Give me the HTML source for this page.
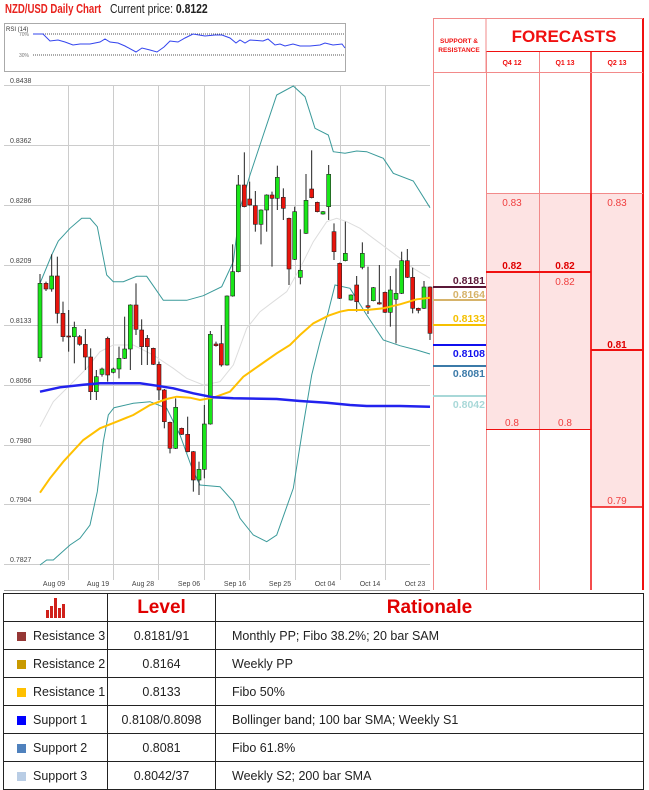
<!DOCTYPE html>
<html><head><meta charset="utf-8"><style>
*{margin:0;padding:0;box-sizing:border-box}
body{width:649px;height:790px;background:#fff;font-family:"Liberation Sans",sans-serif;position:relative;overflow:hidden}
.t{position:absolute;white-space:nowrap;transform-origin:0 0}
table{position:absolute;left:3px;top:593px;width:641px;border-collapse:collapse;font-size:12.5px;color:#222;table-layout:fixed}
td{border:1px solid #222;height:28px;padding:0;white-space:nowrap;line-height:26px;overflow:hidden}
td.c{text-align:center}
td.r{padding-left:16px}
.sq{display:inline-block;width:9px;height:9px;margin:0 7px 0 13px;vertical-align:-1px}
.h{color:#e00000;font-weight:bold;font-size:19px;text-align:center}
</style></head><body>
<div class="t" style="left:5px;top:1px;font-size:13px;font-weight:bold;color:#e8231e;transform:scaleX(0.74)">NZD/USD Daily Chart</div>
<div class="t" style="left:110px;top:1px;font-size:13px;color:#222;transform:scaleX(0.8)">Current price: <b>0.8122</b></div>
<svg id="s" width="649" height="593" style="position:absolute;left:0;top:0" font-family="Liberation Sans, sans-serif"></svg>
<table>
<colgroup><col style="width:104px"><col style="width:108px"><col></colgroup>
<tr><td style="text-align:center"><svg width="22" height="20" viewBox="0 0 22 20" style="vertical-align:middle"><g fill="#d0201a"><rect x="1" y="12" width="3" height="8"/><rect x="5" y="8" width="3" height="12"/><rect x="9" y="0" width="3" height="20"/><rect x="13" y="10" width="3" height="10"/><rect x="17" y="6" width="3" height="14"/></g></svg></td><td class="h">Level</td><td class="h">Rationale</td></tr>
<tr><td><span class="sq" style="background:#953735"></span>Resistance 3</td><td class="c">0.8181/91</td><td class="r">Monthly PP; Fibo 38.2%; 20 bar SAM</td></tr>
<tr><td><span class="sq" style="background:#c99a00"></span>Resistance 2</td><td class="c">0.8164</td><td class="r">Weekly PP</td></tr>
<tr><td><span class="sq" style="background:#ffc000"></span>Resistance 1</td><td class="c">0.8133</td><td class="r">Fibo 50%</td></tr>
<tr><td><span class="sq" style="background:#0000ff"></span>Support 1</td><td class="c">0.8108/0.8098</td><td class="r">Bollinger band; 100 bar SMA; Weekly S1</td></tr>
<tr><td><span class="sq" style="background:#4f81bd"></span>Support 2</td><td class="c">0.8081</td><td class="r">Fibo 61.8%</td></tr>
<tr><td><span class="sq" style="background:#b9cde5"></span>Support 3</td><td class="c">0.8042/37</td><td class="r">Weekly S2; 200 bar SMA</td></tr>
</table>
<script>
var s='';
function L(x1,y1,x2,y2,c,w,extra){s+='<line x1="'+x1+'" y1="'+y1+'" x2="'+x2+'" y2="'+y2+'" stroke="'+c+'" stroke-width="'+(w||1)+'" '+(extra||'')+'/>';}
function R(x,y,w,h,f,st,sw){s+='<rect x="'+x+'" y="'+y+'" width="'+w+'" height="'+h+'" fill="'+f+'"'+(st?' stroke="'+st+'" stroke-width="'+(sw||1)+'"':'')+'/>';}
function T(x,y,t,sz,c,a,b){s+='<text x="'+x+'" y="'+y+'" font-size="'+sz+'" fill="'+c+'"'+(a?' text-anchor="'+a+'"':'')+(b?' font-weight="bold"':'')+'>'+t+'</text>';}
R(4.5,23.5,341,48,'#fff','#aaa');
T(6,31,'RSI (14)',6,'#333');
L(33,34,344,34,'#555',1,'stroke-dasharray="1,1"');L(33,55,344,55,'#555',1,'stroke-dasharray="1,1"');
T(29,36,'70%',5,'#777','end');T(29,57,'30%',5,'#777','end');
var rsi=[[33,34],[43,34],[50,41],[58,40],[65,42],[73,45],[80,44],[90,44],[100,42],[105,39],[110,42],[118,43],[125,46],[136,52],[142,48],[150,50],[157,52],[164,47],[170,41],[178,42],[185,38],[193,34],[205,36],[215,35],[222,35],[230,38],[236,43],[240,40],[245,43],[250,40],[263,41],[268,39],[275,45],[280,44],[285,46],[293,44],[300,46],[310,46],[320,45],[325,43],[333,45],[342,44],[345,48]];
s+='<polyline fill="none" stroke="#3344ee" stroke-width="1" points="'+rsi.map(p=>p.join(',')).join(' ')+'"/>';
var gy=[85,145,205,265,325,385,445,504,564],lab=['0.8438','0.8362','0.8286','0.8209','0.8133','0.8056','0.7980','0.7904','0.7827'];
gy.forEach((y,i)=>{L(4,y+.5,430,y+.5,'#ccc');T(10,y-2,lab[i],7,'#444');});
[68,113,158,204,249,295,340,385].forEach(x=>L(x+.5,85,x+.5,580,'#ccc'));
L(4,590.5,430,590.5,'#999');
var dl=['Aug 09','Aug 19','Aug 28','Sep 06','Sep 16','Sep 25','Oct 04','Oct 14','Oct 23'],dx=[54,98,143,189,235,280,325,370,415];
dl.forEach((d,i)=>T(dx[i],586,d,7,'#444','middle'));
function P(a,c,w){s+='<polyline fill="none" stroke="'+c+'" stroke-width="'+w+'" points="'+a.map(p=>(p[0]/3).toFixed(1)+','+(p[1]/3+75).toFixed(1)).join(' ')+'"/>';}
P([[120,1055],[160,980],[210,930],[260,880],[300,830],[340,810],[400,810],[460,840],[520,880],[560,910],[610,930],[660,920],[700,870],[740,760],[780,710],[820,680],[860,650],[900,580],[940,500],[980,440],[1010,430],[1040,440],[1080,460],[1120,490],[1160,520],[1200,550],[1240,580],[1290,610]],'#ddd',1);
P([[120,625],[155,540],[175,498],[210,460],[245,430],[270,430],[292,455],[320,600],[340,620],[370,620],[410,604],[440,604],[490,676],[560,676],[610,662],[665,635],[700,560],[720,400],[750,300],[790,180],[830,60],[880,33],[915,65],[945,160],[985,180],[1000,230],[1035,235],[1070,228],[1100,230],[1150,250],[1180,295],[1240,318],[1290,398]],'#3a9a9a',1);
P([[120,1470],[140,1455],[160,1455],[210,1410],[240,1390],[270,1350],[292,1250],[310,1100],[325,1020],[342,998],[400,985],[450,980],[500,1000],[540,1080],[580,1190],[600,1230],[660,1235],[700,1280],[720,1330],[760,1380],[800,1400],[830,1380],[880,1240],[910,1050],[935,900],[960,800],[985,710],[1005,630],[1050,640],[1100,720],[1150,795],[1200,812],[1250,825],[1290,837]],'#3a9a9a',1);
var c=[[120,'g',625,848,597,860],[138,'r',625,642,620,648],[155,'g',603,642,538,650],[172,'r',603,715,545,745],[189,'r',715,785,680,800],[206,'r',783,786,705,830],[223,'g',757,785,740,865],[239,'r',785,808,780,812],[256,'r',808,846,762,885],[272,'r',846,950,820,975],[289,'g',905,950,885,975],[306,'g',882,898,878,905],[323,'r',790,900,785,920],[340,'g',882,892,878,895],[357,'g',850,882,815,910],[374,'g',822,850,725,852],[391,'g',690,822,688,885],[408,'r',690,763,625,780],[425,'r',765,815,733,870],[442,'r',790,815,780,870],[460,'r',820,868,818,870],[477,'r',868,945,860,975],[493,'r',945,1040,942,1060],[510,'r',1042,1120,1040,1135],[527,'g',997,1120,970,1122],[545,'r',1060,1078,1058,1080],[563,'r',1078,1130,1025,1132],[580,'r',1130,1215,1128,1250],[597,'g',1183,1215,1160,1260],[613,'g',1047,1183,990,1210],[631,'g',778,1047,768,1049],[648,'r',807,812,800,815],[664,'r',806,870,750,875],[681,'g',663,870,661,872],[698,'g',590,663,508,665],[715,'g',330,590,300,592],[733,'r',330,395,232,397],[749,'r',372,390,320,392],[766,'r',392,448,348,470],[783,'g',405,448,403,508],[800,'g',360,405,358,470],[816,'r',360,370,350,575],[832,'g',307,370,272,405],[850,'r',367,400,340,435],[867,'r',430,582,428,630],[884,'g',410,553,395,555],[901,'g',586,607,463,628],[918,'g',376,475,297,477],[935,'r',342,368,226,370],[952,'r',382,410,380,412],[969,'g',410,417,408,419],[986,'g',298,395,270,435],[1002,'r',470,530,445,555],[1019,'r',565,670,563,672],[1036,'g',535,557,440,559],[1053,'g',660,675,658,677],[1070,'r',630,680,603,710],[1087,'g',535,577,502,583],[1104,'r',692,697,575,717],[1120,'g',638,677,636,679],[1138,'r',683,687,570,689],[1155,'r',652,712,650,714],[1171,'g',645,712,603,755],[1188,'g',655,673,580,805],[1205,'g',557,655,530,657],[1222,'r',557,607,522,609],[1238,'r',607,700,578,715],[1255,'r',700,706,698,715],[1272,'g',636,700,618,702],[1290,'r',636,775,634,795]];
c.forEach(k=>{var x=k[0]/3,y1=k[2]/3+75,y2=k[3]/3+75;L(x,k[4]/3+75,x,k[5]/3+75,'#222');R(x-2,y1,4,Math.max(1,y2-y1),k[1]=='g'?'#19e619':'#e8140c','#222',0.6);});
P([[120,1253],[150,1210],[190,1160],[250,1095],[300,1060],[350,1040],[400,1020],[450,990],[500,972],[530,965],[570,968],[600,975],[640,968],[690,950],[730,905],[780,870],[830,835],[870,810],[900,780],[940,745],[985,722],[1020,710],[1045,705],[1100,705],[1150,700],[1200,688],[1250,673],[1290,668]],'#ffc000',2);
P([[120,950],[180,937],[250,929],[300,925],[420,925],[470,932],[520,940],[580,955],[640,967],[700,970],[830,972],[900,978],[980,983],[1050,990],[1100,993],[1200,993],[1290,995]],'#2222ee',2.5);
R(486,193,53,236,'#fde3e3');R(539,193,52,236,'#fde3e3');R(591,193,52,314,'#fde3e3');
var lc='#f28a8a';
L(433.5,18,433.5,590,lc);L(486.5,51,486.5,590,lc);L(539.5,51,539.5,590,lc);L(591,51,591,590,'#f01010',1.5);L(643,18,643,590,'#f01010',2);
L(433,18.5,643,18.5,lc);L(486,51.5,643,51.5,'#f01010');L(433,72.5,643,72.5,lc);L(486,18,486,72,lc);
L(486,193.5,643,193.5,lc);L(486,429.5,591,429.5,'#f01010');L(591,507,643,507,'#f01010',1.5);L(591,193,591,507,'#f01010',1.5);
L(486,272,591,272,'#f01010',2);L(591,350,643,350,'#f01010',2);
T(564,42,'FORECASTS',17,'#f01010','middle',true);
T(459,43,'SUPPORT &amp;',6.5,'#f01010','middle',true);T(459,52,'RESISTANCE',6.5,'#f01010','middle',true);
T(512,65,'Q4 12',7,'#f01010','middle',true);T(565,65,'Q1 13',7,'#f01010','middle',true);T(617,65,'Q2 13',7,'#f01010','middle',true);
T(512,206,'0.83',10,'#f04040','middle');T(617,206,'0.83',10,'#f04040','middle');
T(512,269,'0.82',10,'#e00000','middle',true);T(565,269,'0.82',10,'#e00000','middle',true);T(565,285,'0.82',10,'#f04040','middle');
T(617,348,'0.81',10,'#e00000','middle',true);T(512,426,'0.8',10,'#f04040','middle');T(565,426,'0.8',10,'#f04040','middle');T(617,504,'0.79',10,'#f04040','middle');
var lv=[[287,'#5a1838','0.8181',284,'#5a1838'],[300,'#d6b36a','0.8164',298,'#d6b36a'],[325,'#f5c000','0.8133',322,'#f5c000'],[345,'#1010ee','0.8108',357,'#1010ee'],[366,'#3b7aa8','0.8081',377,'#3b7aa8'],[396,'#a8d8d8','0.8042',408,'#a8d8d8']];
lv.forEach(v=>{L(433,v[0],486,v[0],v[1],2);T(485,v[3],v[2],10.5,v[4],'end',true);});
document.getElementById('s').innerHTML=s;
</script>
</body></html>
